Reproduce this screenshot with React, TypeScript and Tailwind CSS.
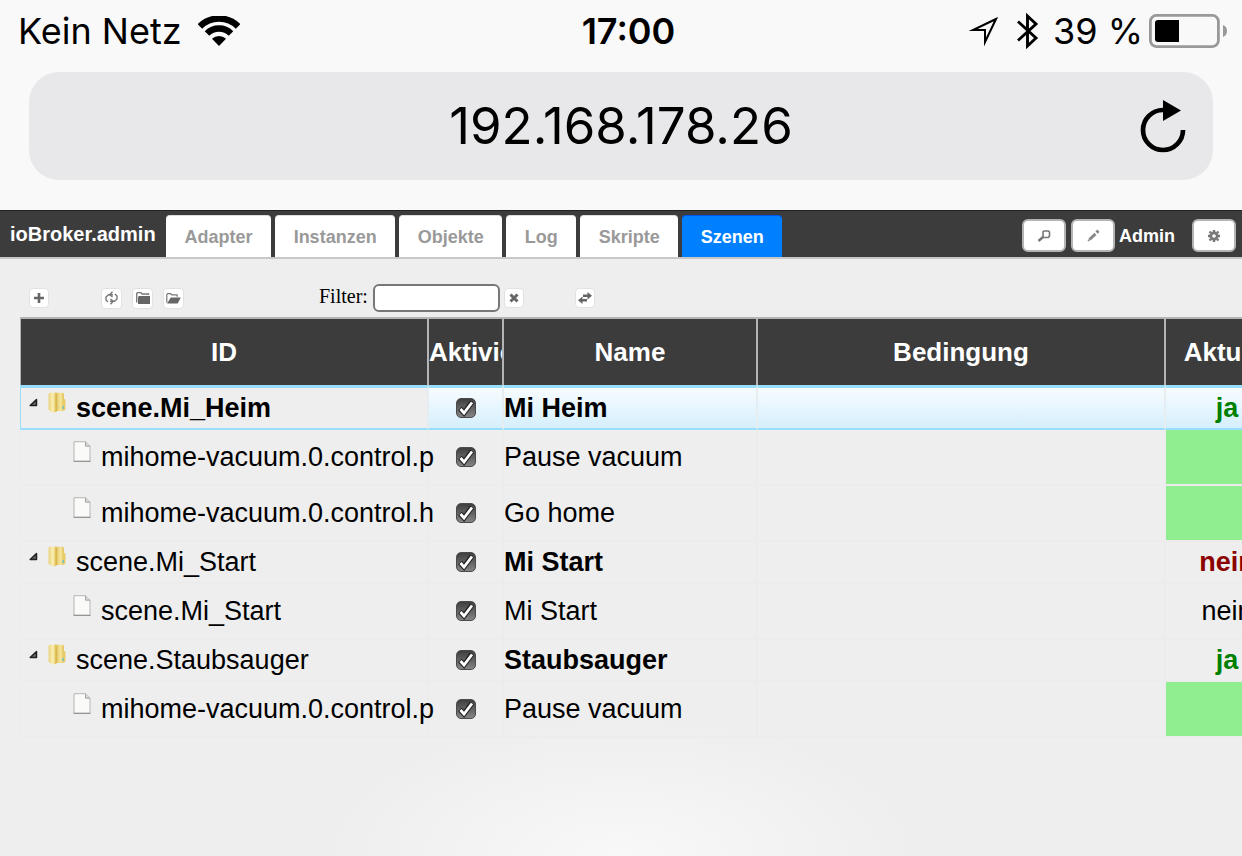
import React, { useState } from 'react';
import clsx from 'clsx';

interface SceneRow {
  key: string;
  id: string;
  name: string;
  child?: boolean;
  state?: 'ja' | 'nein';
  filled?: boolean;
}

const TABS = ['Adapter', 'Instanzen', 'Objekte', 'Log', 'Skripte', 'Szenen'];

const ROWS: SceneRow[] = [
  { key: '1', id: 'scene.Mi_Heim', name: 'Mi Heim', state: 'ja' },
  { key: '1.1', id: 'mihome-vacuum.0.control.p', name: 'Pause vacuum', child: true, filled: true },
  { key: '1.2', id: 'mihome-vacuum.0.control.h', name: 'Go home', child: true, filled: true },
  { key: '2', id: 'scene.Mi_Start', name: 'Mi Start', state: 'nein' },
  { key: '2.1', id: 'scene.Mi_Start', name: 'Mi Start', child: true, state: 'nein' },
  { key: '3', id: 'scene.Staubsauger', name: 'Staubsauger', state: 'ja' },
  { key: '3.1', id: 'mihome-vacuum.0.control.p', name: 'Pause vacuum', child: true, filled: true },
];

const WifiIcon = () => (
  <svg width="42" height="31" viewBox="0 0 42 31" aria-hidden="true">
    <g fill="none" stroke="#000" strokeWidth="6.4">
      <path d="M1.9 10.4A27 27 0 0 1 40.1 10.4" />
      <path d="M9 17.500A17 17 0 0 1 33 17.500" />
    </g>
    <path d="M21 30L14 22.800A10 10 0 0 1 28 22.800Z" />
  </svg>
);

const LocationIcon = () => (
  <svg width="31" height="31" viewBox="0 0 31 31" aria-hidden="true">
    <path d="M28 3L5 14H17V26Z" fill="none" stroke="#000" strokeWidth="2" strokeMiterlimit="10" />
  </svg>
);

const BluetoothIcon = () => (
  <svg width="22" height="38" viewBox="0 0 22 38" aria-hidden="true">
    <path d="M1 9.5L19 26L10.5 34V4L19 12L1 28.5" fill="none" stroke="#000" strokeWidth="2.9" />
  </svg>
);

const BatteryIcon = () => (
  <svg width="78" height="34" viewBox="0 0 78 34" aria-hidden="true">
    <rect x="1.4" y="1.4" width="68" height="31.2" rx="6" fill="none" stroke="#999" strokeWidth="2.8" />
    <path d="M9 6H30V28H9A3 3 0 0 1 6 25V9A3 3 0 0 1 9 6Z" />
    <path d="M74 11Q78 12.500 78 17T74 23Z" fill="#999" />
  </svg>
);

const ReloadIcon = () => (
  <svg width="46" height="54" viewBox="0 0 46 54" aria-hidden="true">
    <path d="M23 11A20 20 0 1 0 43 31" fill="none" stroke="#000" strokeWidth="4.7" />
    <path d="M23 1L41 11.500L23 22Z" />
  </svg>
);

const SearchIcon = () => (
  <svg width="14" height="12" viewBox="0 0 14 12" fill="none" stroke="#777" aria-hidden="true">
    <path d="M6 1.800L7 1H11.500L12.500 2V6L11.500 7.500H7L6 6.500Z" strokeWidth="1.6" />
    <path d="M6 7L1.500 11" strokeWidth="2.4" />
  </svg>
);

const PencilIcon = () => (
  <svg width="13" height="13" viewBox="0 0 13 13" fill="none" stroke="#888" aria-hidden="true">
    <path d="M2.500 10.500L8.500 4.800" strokeWidth="3" />
    <path d="M9.500 3.500L11.500 1.700" strokeWidth="3.200" />
    <path d="M1 12L2.500 10.500" strokeWidth="1.5" />
  </svg>
);

const GearIcon = () => (
  <svg width="12" height="12" viewBox="0 0 12 12" fill="none" stroke="#777" aria-hidden="true">
    <circle cx="6" cy="6" r="3.200" strokeWidth="2.800" />
    <path d="M6 0V2M6 10V12M0 6H2M10 6H12M1.500 1.500L3 3M9 9L10.500 10.500M1.500 10.500L3 9M9 3L10.500 1.500" strokeWidth="2.400" />
  </svg>
);

const PlusIcon = () => (
  <svg width="10" height="10" viewBox="0 0 10 10" aria-hidden="true">
    <path d="M5 0V10M0 5H10" stroke="#666" strokeWidth="2.600" />
  </svg>
);

const RefreshIcon = () => (
  <svg width="13" height="14" viewBox="0 0 13 14" fill="none" stroke="#777" strokeWidth="1.4" aria-hidden="true">
    <path d="M3 11L1 9V6L3.500 3.700H8" />
    <path d="M7.500 0.700L4.800 3.700L7.500 6" />
    <path d="M10 3L12 5V8L9.500 10.300H5" />
    <path d="M5.500 8L8.200 10.300L5.500 13.300" />
  </svg>
);

const FolderClosedIcon = () => (
  <svg width="14" height="12" viewBox="0 0 14 12" aria-hidden="true">
    <path d="M0.700 10.500V1.500L1.500 0.700H5L6 2H12.500V3" fill="none" stroke="#777" strokeWidth="1.3" />
    <path d="M3 4H14V12H2V5Z" fill="#666" />
  </svg>
);

const FolderOpenIcon = () => (
  <svg width="15" height="11" viewBox="0 0 16 12" aria-hidden="true">
    <path d="M0.700 10.500V1.500L1.500 0.700H5L6 2H12V4" fill="none" stroke="#777" strokeWidth="1.3" />
    <path d="M5 5H16L12.500 11.500H1Z" fill="#666" />
  </svg>
);

const CloseIcon = () => (
  <svg width="10" height="10" viewBox="0 0 10 10" aria-hidden="true">
    <path d="M1.500 1.500L8.500 8.500M8.500 1.500L1.500 8.500" stroke="#666" strokeWidth="3" />
  </svg>
);

const SwapIcon = () => (
  <svg width="14" height="12" viewBox="0 0 14 12" fill="#666" aria-hidden="true">
    <path d="M9.500 0L14 3.700L9.500 7.400V5H5V2.500H9.500Z" />
    <path d="M4.500 4.600L0 8.300L4.500 12V9.600H9V7.100H4.500Z" />
  </svg>
);

const ExpanderIcon = () => (
  <svg width="9" height="9" viewBox="0 0 9 9" className="mb-3 shrink-0" aria-hidden="true">
    <path d="M7.500 1.500V7.500H1.200Z" fill="#666" stroke="#222" strokeWidth="1.5" strokeLinejoin="round" />
  </svg>
);

const TreeFolderIcon = () => (
  <svg width="18" height="21" viewBox="0 0 18 21" className="mb-3 shrink-0" aria-hidden="true">
    <defs>
      <linearGradient id="folderFront" x1="0" x2="1">
        <stop offset="0" stopColor="#ead27a" />
        <stop offset="0.550" stopColor="#faf0b8" />
        <stop offset="0.750" stopColor="#f0da84" />
        <stop offset="1" stopColor="#cfa93c" />
      </linearGradient>
      <linearGradient id="folderBack" x1="0" x2="1">
        <stop offset="0" stopColor="#d9b850" />
        <stop offset="0.600" stopColor="#f6e69c" />
        <stop offset="1" stopColor="#dfc15c" />
      </linearGradient>
    </defs>
    <path d="M7 0.800H15L16 2V18L15 19H7Z" fill="url(#folderBack)" />
    <path d="M15 7H17L17.500 8V17L16.500 18.500H15Z" fill="#e8cc68" />
    <path d="M14.500 14H16V17H14.500Z" fill="#6fc3c9" />
    <path d="M0.500 2L1.500 0.800H7.500L8.500 2V19.500L5.500 20.800L0.500 18Z" fill="url(#folderFront)" />
  </svg>
);

const TreeFileIcon = () => (
  <svg width="18" height="21" viewBox="0 0 18 21" className="mb-3 shrink-0" aria-hidden="true">
    <path d="M1 0.700H12.500L17 5.200V20.300H1Z" fill="#fafaf8" stroke="#b5b5b5" />
    <path d="M12.500 0.700V5.200H17" fill="#d8d8d8" stroke="#a5a5a5" />
    <path d="M0.500 20.300H17.500" stroke="#8a8a8a" />
  </svg>
);

interface IconButtonProps {
  label: string;
  className?: string;
  children: React.ReactNode;
  onClick?: () => void;
}

const HeaderButton = ({ label, className, children }: IconButtonProps) => (
  <button
    type="button"
    aria-label={label}
    className={clsx('flex h-[33px] w-11 items-center justify-center rounded-md border-2 border-[#b4b4b4] bg-white', className)}
  >
    {children}
  </button>
);

const ToolButton = ({ label, className, children, onClick }: IconButtonProps) => (
  <button
    type="button"
    aria-label={label}
    onClick={onClick}
    className={clsx('flex shrink-0 items-center justify-center rounded border border-[#e2e2e2] bg-white', className)}
  >
    {children}
  </button>
);

const SceneCheckbox = ({ label }: { label: string }) => (
  <span className="mx-auto grid size-5">
    <input
      type="checkbox"
      defaultChecked
      aria-label={label}
      className="peer col-start-1 row-start-1 size-5 appearance-none rounded-[5px] border border-[#4a4a4a] bg-linear-to-b from-[#3f3f3f] to-[#858585]"
    />
    <svg
      viewBox="0 0 20 20"
      className="pointer-events-none invisible col-start-1 row-start-1 size-5 peer-checked:visible"
      fill="none"
      aria-hidden="true"
    >
      <path d="M4 10.500L8 15L16 4" stroke="#222" strokeWidth="5" />
      <path d="M4.500 11L8 15L16 4.500" stroke="#fff" strokeWidth="2.800" />
    </svg>
  </span>
);

const StatusBar = () => (
  <div className="grid h-[62px] grid-cols-3 items-center pr-[15px] pl-[18px] text-4xl">
    <div className="flex items-center gap-4 whitespace-nowrap">
      <span>Kein Netz</span>
      <WifiIcon />
    </div>
    <div className="pl-3 text-center font-semibold">17:00</div>
    <div className="flex items-center justify-end whitespace-nowrap">
      <LocationIcon />
      <span className="ml-[18px]">
        <BluetoothIcon />
      </span>
      <span className="ml-[14px]">39 %</span>
      <span className="ml-[6px]">
        <BatteryIcon />
      </span>
    </div>
  </div>
);

const AddressBar = () => (
  <div className="mx-[29px] mt-[10px] mb-[30px] flex h-[108px] items-center rounded-[30px] bg-[#e8e8ea] pr-[27px] pl-[73px]">
    <input
      type="text"
      aria-label="Adresse"
      defaultValue="192.168.178.26"
      className="min-w-0 flex-1 bg-transparent text-center text-[51px] leading-[60px] outline-none"
    />
    <button type="button" aria-label="Neu laden" className="shrink-0">
      <ReloadIcon />
    </button>
  </div>
);

const AdminHeader = () => {
  const [active, setActive] = useState('Szenen');

  return (
    <header className="flex h-[49px] items-end overflow-hidden border-t border-b-2 border-t-[#222] border-b-[#c8c8c8] bg-[#3c3c3c] text-lg font-bold">
      <h1 className="self-center px-[10px] text-xl text-white">ioBroker.admin</h1>
      <nav className="flex gap-1">
        {TABS.map((tab) => (
          <button
            key={tab}
            type="button"
            onClick={() => setActive(tab)}
            className={clsx(
              'h-[42px] rounded-t border-t pr-[18px] pl-[19px]',
              tab === active ? 'border-[#0055ee] bg-[#007fff] text-white' : 'border-[#ddd] bg-white text-[#999]'
            )}
          >
            {tab}
          </button>
        ))}
      </nav>
      <div className="ml-auto flex items-center pr-[6px] pb-[5px]">
        <HeaderButton label="Suchen">
          <SearchIcon />
        </HeaderButton>
        <HeaderButton label="Bearbeiten" className="ml-[5px]">
          <PencilIcon />
        </HeaderButton>
        <span className="ml-1 text-white">Admin</span>
        <HeaderButton label="Einstellungen" className="ml-[17px]">
          <GearIcon />
        </HeaderButton>
      </div>
    </header>
  );
};

const Toolbar = () => {
  const [filter, setFilter] = useState('');

  return (
    <div className="flex h-[58px] items-center pt-5 pl-[29px]">
      <ToolButton label="Neue Szene" className="size-5">
        <PlusIcon />
      </ToolButton>
      <div className="ml-[52px] flex gap-[10px]">
        <ToolButton label="Aktualisieren" className="size-[21px]">
          <RefreshIcon />
        </ToolButton>
        <ToolButton label="Alle zuklappen" className="size-[21px]">
          <FolderClosedIcon />
        </ToolButton>
        <ToolButton label="Alle aufklappen" className="size-[21px]">
          <FolderOpenIcon />
        </ToolButton>
      </div>
      <label htmlFor="filter" className="ml-[135px] pb-1 font-['Liberation_Serif',serif] text-xl">
        Filter:
      </label>
      <input
        id="filter"
        type="text"
        value={filter}
        onChange={(e) => setFilter(e.target.value)}
        className="ml-[5px] h-7 w-[127px] rounded-md border-2 border-[#777] bg-white px-2 text-base"
      />
      <ToolButton label="Filter löschen" className="ml-1 size-5" onClick={() => setFilter('')}>
        <CloseIcon />
      </ToolButton>
      <ToolButton label="Importieren" className="ml-[51px] size-5">
        <SwapIcon />
      </ToolButton>
    </div>
  );
};

const SceneTable = () => {
  const [selected, setSelected] = useState('1');

  return (
    <table className="ml-5 w-full min-w-[1270px] table-fixed border-separate border-spacing-0 text-[27px] leading-[30px]">
      <colgroup>
        <col className="w-[409px]" />
        <col className="w-[75px]" />
        <col className="w-[254px]" />
        <col />
        <col className="w-[124px]" />
      </colgroup>
      <thead>
        <tr className="h-[68px] bg-[#3c3c3c] text-[26px] text-white">
          {['ID', 'Aktiviert', 'Name', 'Bedingung', 'Aktuell'].map((title) => (
            <th
              key={title}
              className="overflow-hidden border-t-2 border-r-2 border-[#b4b4b4] p-0 text-center whitespace-nowrap first:border-l"
            >
              {title}
            </th>
          ))}
        </tr>
      </thead>
      <tbody>
        {ROWS.map((row) => {
          const isSelected = row.key === selected;
          const cell = clsx(
            'border-r-2 p-0',
            isSelected
              ? 'border-t-3 border-b-2 border-t-[#99defd] border-r-[#e6edf0] border-b-[#99defd]'
              : 'border-b-2 border-[#ececec]'
          );
          const tint = isSelected && 'bg-linear-to-b from-[#f7fcff] to-[#d5effc]';

          return (
            <tr
              key={row.key}
              onClick={() => setSelected(row.key)}
              className={isSelected ? 'h-[45px]' : row.child ? 'h-14' : 'h-[42px]'}
            >
              <td className={clsx(cell, 'border-l', isSelected && 'border-l-[#99defd]')}>
                <div className={clsx('flex items-center gap-[10px] whitespace-nowrap', row.child ? 'pl-[52px]' : 'pl-2')}>
                  {row.child ? (
                    <TreeFileIcon />
                  ) : (
                    <>
                      <ExpanderIcon />
                      <TreeFolderIcon />
                    </>
                  )}
                  <span className={clsx(isSelected && 'font-bold')}>{row.id}</span>
                </div>
              </td>
              <td className={clsx(cell, tint)}>
                <SceneCheckbox label={row.name} />
              </td>
              <td className={clsx(cell, tint, !row.child && 'font-bold')}>{row.name}</td>
              <td className={clsx(cell, tint)} />
              <td
                className={clsx(
                  cell,
                  tint,
                  'text-center',
                  row.filled && 'bg-[#90ee90]',
                  !row.child && 'font-bold',
                  !row.child && (row.state === 'ja' ? 'text-[#008000]' : 'text-[#8b0000]')
                )}
              >
                {row.state}
              </td>
            </tr>
          );
        })}
      </tbody>
    </table>
  );
};

export default function App() {
  return (
    <div className="flex min-h-screen flex-col bg-[#f9f9f9] font-[Inter,sans-serif] text-black">
      <StatusBar />
      <AddressBar />
      <main className="flex-1 overflow-hidden bg-[#eee] bg-[radial-gradient(ellipse_300px_140px_at_bottom,#f8f8f8,#eee)] font-['Liberation_Sans',Arial,sans-serif]">
        <AdminHeader />
        <Toolbar />
        <SceneTable />
      </main>
    </div>
  );
}
